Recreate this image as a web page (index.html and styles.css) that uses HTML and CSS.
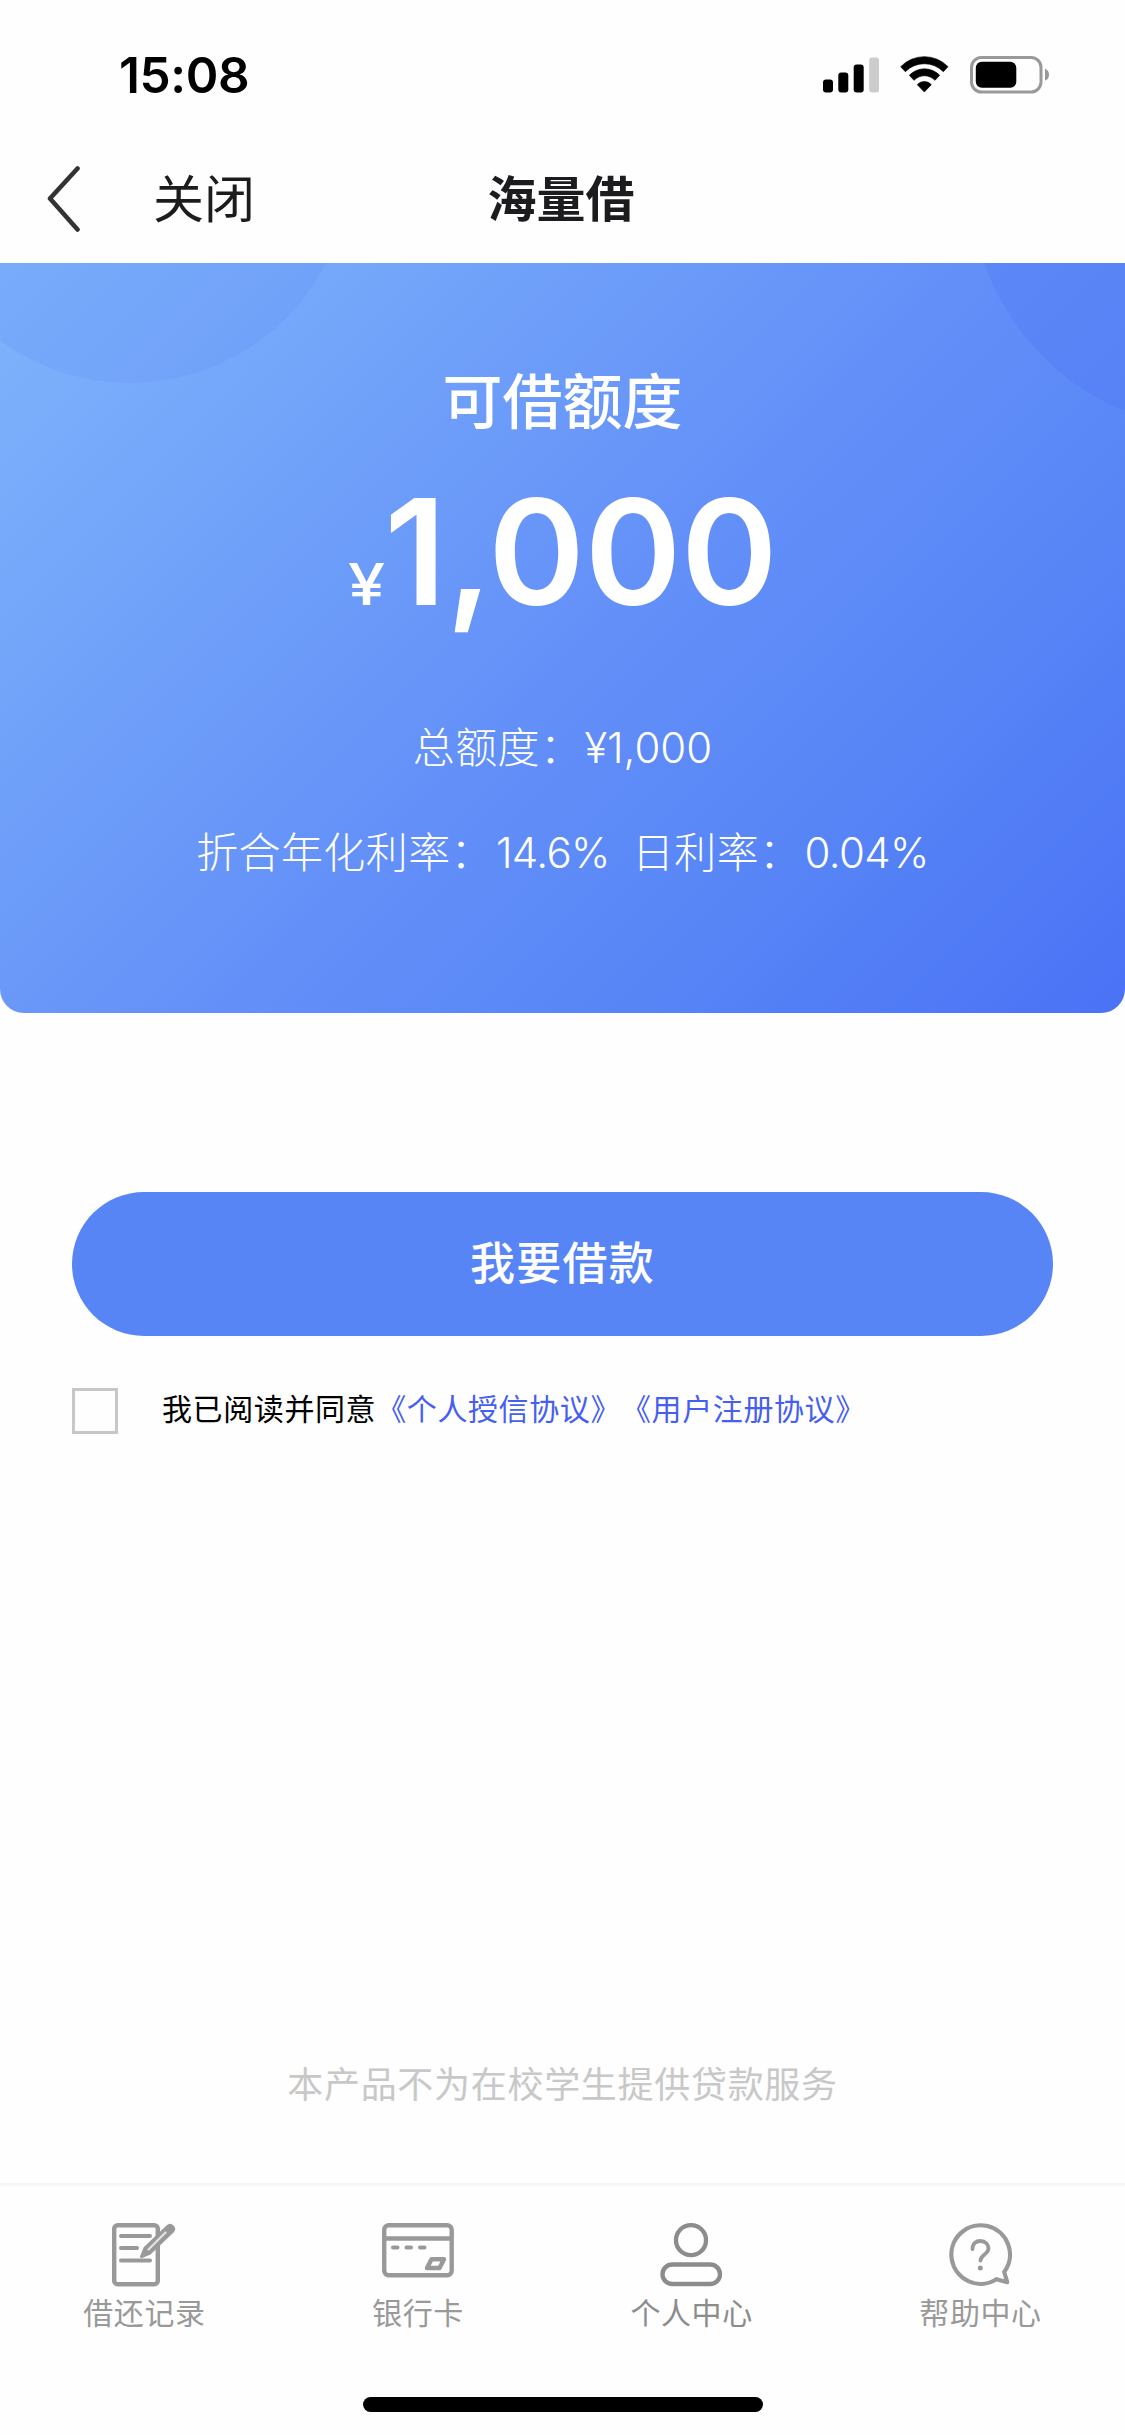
FILE: index.html
```html
<!DOCTYPE html>
<html lang="zh-CN">
<head>
<meta charset="utf-8">
<title>海量借</title>
<link rel="stylesheet" href="styles.css">
</head>
<body>
<div class="screen">
  <div class="status-bar">
    <span class="time">15:08</span>
    <div class="status-icons">
      <svg class="signal" viewBox="0 0 56 36">
        <rect x="0" y="22.5" width="10" height="13" rx="3"/>
        <rect x="15.3" y="15.5" width="10" height="20" rx="3"/>
        <rect x="30.7" y="7.5" width="10" height="28" rx="3"/>
        <rect x="46.2" y="0.5" width="10" height="35" rx="3" fill="#ccc"/>
      </svg>
      <svg class="wifi" viewBox="360 78 147 111">
        <g stroke="#000" stroke-width="2" stroke-linejoin="round">
          <path d="M362 110A99 99 0 0 1 504 110L490 125A80 80 0 0 0 376 125Z"/>
          <path d="M388 136A63 63 0 0 1 479 136L465 151A43 43 0 0 0 402 151Z"/>
          <path d="M412 164A28 28 0 0 1 454 164L433 186Z"/>
        </g>
      </svg>
      <svg class="battery" viewBox="0 0 80 38">
        <rect x="1.5" y="1.5" width="69.5" height="34.5" rx="10" fill="none" stroke="#999" stroke-width="3"/>
        <rect x="5.8" y="5.8" width="40.5" height="26" rx="6"/>
        <path d="M75 12.5Q79 14.5 79 18.7Q79 23 75 24.7Z" fill="#999"/>
      </svg>
    </div>
  </div>

  <div class="nav-bar">
    <svg class="back" viewBox="0 0 36 66"><path d="M32.5 2.5L5 32.5L32.5 63.5" fill="none" stroke="#333" stroke-width="4.6" stroke-linecap="round" stroke-linejoin="round"/></svg>
    <span class="close">关闭</span>
    <h1 class="title">海量借</h1>
  </div>

  <section class="quota">
    <h2 class="quota-label">可借额度</h2>
    <div class="amount"><span class="yen">¥</span><span class="number">1,000</span></div>
    <p class="total">总额度：<span class="total-figure">¥1,000</span></p>
    <p class="rates"><span>折合年化利率：<span class="figure">14.6%</span></span><span>日利率：<span class="figure">0.04%</span></span></p>
  </section>

  <main class="content">
    <button class="apply">我要借款</button>
    <div class="agreement">
      <span class="checkbox"></span>
      <span class="agree-text">我已阅读并同意<a class="link">《个人授信协议》</a><a class="link">《用户注册协议》</a></span>
    </div>
    <p class="notice">本产品不为在校学生提供贷款服务</p>
  </main>

  <nav class="tab-bar">
    <div class="tab">
      <svg class="tab-icon" width="64" height="64" viewBox="0 0 64 64" fill="none" stroke="#999" stroke-linecap="round" stroke-linejoin="round">
        <rect x="2.2" y="2.2" width="43.600" height="59" rx="3.500" stroke-width="4.400"/>
        <path d="M9 13H38M9 25H25M9 37.500H38" stroke-width="4"/>
        <path d="M55.500 3.500Q58 1 60.500 3.500Q63 6 60.500 8.500L38 30L29.500 33.500L33 25Z" fill="#999" stroke-width="3"/>
        <path d="M53.500 9.500L36.500 26.500" stroke="#e4e4e4" stroke-width="2.200"/>
      </svg>
      <span>借还记录</span>
    </div>
    <div class="tab">
      <svg class="tab-icon" width="72" height="64" viewBox="0 0 72 64" fill="none" stroke="#999" stroke-width="4.400" stroke-linecap="round" stroke-linejoin="round">
        <rect x="2.200" y="2.200" width="67.500" height="50" rx="4.500"/>
        <path d="M3 15.500H69"/>
        <path d="M11 24.500H15.500M24.500 24.500H29M38 24.500H42.500" stroke-width="4"/>
        <path d="M49.500 36.200H62L57.500 45H45Z"/>
      </svg>
      <span>银行卡</span>
    </div>
    <div class="tab tab-dark">
      <svg class="tab-icon" width="63" height="64" viewBox="0 0 63 64" fill="none" stroke="#8c8c8c" stroke-width="4.300">
        <circle cx="31" cy="17.200" r="15"/>
        <rect x="2.500" y="41.500" width="57.500" height="19.500" rx="9.750"/>
      </svg>
      <span>个人中心</span>
    </div>
    <div class="tab">
      <svg class="tab-icon" width="63" height="64" viewBox="0 0 63 64" fill="none" stroke="#999" stroke-width="4.200" stroke-linecap="round" stroke-linejoin="round">
        <path d="M47.500 56.200L58.200 59.200L55.200 49A29.300 29.300 0 1 0 47.500 56.200Z"/>
        <path d="M23.500 26C23.500 20.500 27 18 31.500 18C36.500 18 39.500 21.500 39.500 25.500C39.500 31 31.500 32 31.500 37.500" stroke-width="3.800"/>
        <circle cx="31.300" cy="45" r="2.500" fill="#999" stroke="none"/>
      </svg>
      <span>帮助中心</span>
    </div>
  </nav>
  <div class="home-area"><div class="home-indicator"></div></div>
</div>
</body>
</html>
```
FILE: styles.css
```css
* {
  box-sizing: border-box;
}

body,
h1,
h2,
p {
  margin: 0;
}

body {
  background: #fefefe;
  font-family: Inter, "Noto Sans CJK SC", sans-serif;
  font-weight: 400;
  text-spacing-trim: space-all;
}

svg {
  display: block;
  flex: none;
}

.screen {
  display: flex;
  flex-direction: column;
  width: 1125px;
  height: 2435px;
  overflow: hidden;
}

.status-bar {
  display: flex;
  justify-content: space-between;
  align-items: center;
  height: 149px;
  padding: 0 75px 0 119px;
}

.time {
  padding-top: 1px;
  font-size: 49.5px;
  font-weight: 600;
  letter-spacing: -0.4px;
  line-height: 60px;
}

.status-icons {
  display: flex;
  align-items: center;
}

.signal {
  width: 56px;
  height: 36px;
  margin-right: 21px;
}

.wifi {
  width: 49px;
  height: 37px;
  margin-right: 21px;
}

.battery {
  width: 80px;
  height: 38px;
}

.nav-bar {
  display: grid;
  grid-template-columns: 36px 1fr auto 1fr 36px;
  align-items: center;
  height: 114px;
  padding: 0 48px 14px 45px;
  color: #1c1c1e;
  font-size: 51px;
  line-height: 70px;
}

.back {
  width: 36px;
  height: 66px;
}

.close {
  padding: 2px 0 0 72px;
}

.title {
  padding-top: 2px;
  font-size: 49px;
  font-weight: 700;
}

.quota {
  display: flex;
  flex-direction: column;
  align-items: center;
  height: 750px;
  padding-top: 99px;
  border-radius: 0 0 24px 24px;
  background:
    radial-gradient(circle at 130px -100px, rgba(96, 140, 246, 0.22) 219.5px, transparent 220.5px),
    radial-gradient(circle at 1220px -83px, rgba(72, 110, 245, 0.24) 249.5px, transparent 250.5px),
    linear-gradient(135deg, #7fb4fb 0%, #628ff8 53%, #5886f6 72%, #4a72f6 100%);
  color: #fff;
}

.quota-label {
  height: 80px;
  font-size: 60px;
  font-weight: 500;
  line-height: 80px;
}

.amount {
  display: flex;
  align-items: baseline;
  height: 180px;
  margin-top: 20px;
  line-height: 180px;
}

.yen {
  margin-right: 5px;
  font-size: 57px;
  font-weight: 500;
  transform: scaleX(1.17);
  transform-origin: left;
}

.number {
  font-size: 146.5px;
  font-weight: 600;
  letter-spacing: -0.3px;
}

.total,
.rates {
  font-size: 42px;
  font-weight: 300;
  letter-spacing: 0.4px;
  line-height: 60px;
}

.total {
  margin-top: 76px;
}

.total-figure {
  margin-left: 2px;
  letter-spacing: 0;
}

.rates {
  display: flex;
  gap: 22px;
  margin-top: 45px;
}

.figure {
  margin-left: 3px;
  letter-spacing: -0.6px;
}

.content {
  display: flex;
  flex: 1;
  flex-direction: column;
  padding: 179px 72px 0;
}

.apply {
  height: 144px;
  padding: 0;
  border: 0;
  border-radius: 72px;
  background: #5885f6;
  color: #fff;
  font: 500 45px/60px Inter, "Noto Sans CJK SC", sans-serif;
  letter-spacing: 1.2px;
}

.agreement {
  display: flex;
  align-items: center;
  gap: 44px;
  margin-top: 52px;
}

.checkbox {
  width: 46px;
  height: 46px;
  border: 3px solid #c7c7ca;
}

.agree-text {
  height: 46px;
  color: #000;
  font-size: 30px;
  letter-spacing: 0.6px;
  line-height: 42px;
  white-space: nowrap;
}

.link {
  color: #465ff0;
}

.notice {
  margin-top: auto;
  margin-bottom: 73px;
  color: #c8c8c8;
  font-size: 36px;
  letter-spacing: 0.7px;
  line-height: 50px;
  text-align: center;
}

.tab-bar {
  display: flex;
  justify-content: space-around;
  height: 194px;
  padding-top: 37px;
  border-top: 3px solid #f6f6f6;
  color: #999;
  font-size: 30px;
  letter-spacing: 0.6px;
  line-height: 40px;
}

.tab {
  display: flex;
  flex-direction: column;
  align-items: center;
  gap: 6px;
}

.tab-dark {
  color: #8c8c8c;
}

.home-area {
  display: flex;
  justify-content: center;
  height: 58px;
  padding-top: 20px;
}

.home-indicator {
  width: 400px;
  height: 15px;
  border-radius: 8px;
  background: #000;
}
```
